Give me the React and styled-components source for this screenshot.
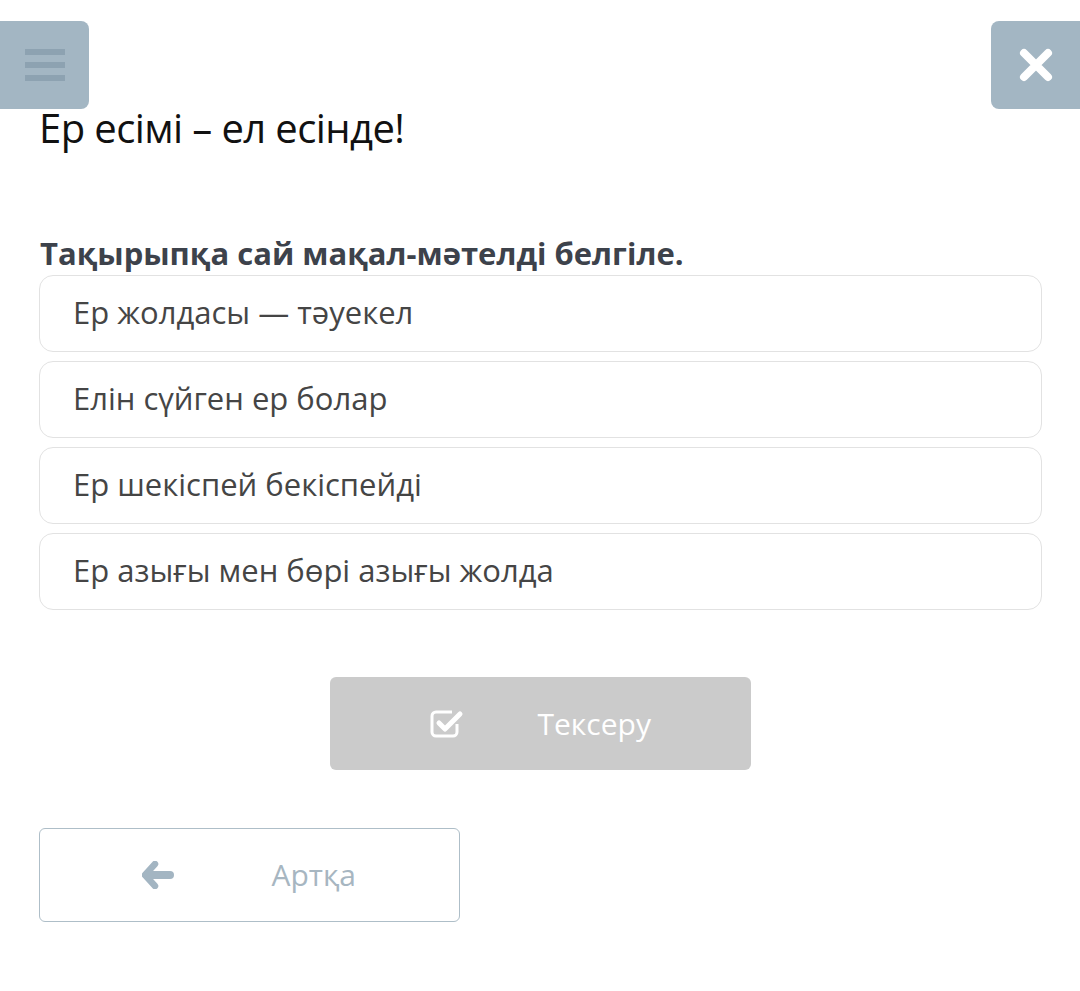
import React from 'react'
import styled, { createGlobalStyle } from 'styled-components'

const Global = createGlobalStyle`
    html, body {
        margin: 0;
        padding: 0;
        background: #FFFFFF;
        font-family: "Open Sans", "Noto Sans", sans-serif;
    }
`
const Page = styled.div`
    width: 1080px;
    min-height: 991px;
    padding-top: 21px;
    box-sizing: border-box;
`
const TopBar = styled.div`
    display: flex;
    justify-content: space-between;
    height: 88px;
`
const CornerButton = styled.button`
    width: 89px;
    height: 88px;
    border: 0;
    padding: 0;
    background-color: #A3B6C3;
    border-radius: ${p => p.side === 'left' ? '0 8px 8px 0' : '8px 0 0 8px'};
    display: flex;
    align-items: center;
    justify-content: center;
`
const Content = styled.div`
    padding: 0 38px 0 39px;
`
const Title = styled.h1`
    margin: -6px 0 0 0;
    font: normal 40px/50px "Open Sans", sans-serif;
    letter-spacing: -0.6px;
    color: #111111;
`
const Question = styled.h2`
    margin: 80px 0 0 1px;
    font: bold 31px/40px "Open Sans", sans-serif;
    color: #3D424B;
`
const Options = styled.div`
    display: flex;
    flex-direction: column;
    gap: 9px;
    margin-top: 2px;
`
const Option = styled.div`
    height: 75px;
    box-sizing: content-box;
    border: 1px solid #E2E2E2;
    border-radius: 14px;
    display: flex;
    align-items: center;
    padding: 0 0 0 33px;
    font: normal 31px/40px "Open Sans", sans-serif;
    color: #454545;
    & > span {
        margin-top: -3px;
    }
`
const CheckRow = styled.div`
    display: flex;
    justify-content: center;
    margin-top: 67px;
`
const ActionButton = styled.button`
    width: 421px;
    height: ${p => p.outline ? 94 : 93}px;
    box-sizing: border-box;
    border-radius: 6px;
    border: ${p => p.outline ? '1px solid #AEBEC8' : '0'};
    background-color: ${p => p.outline ? '#FFFFFF' : '#CBCBCB'};
    color: ${p => p.outline ? '#A7B6C1' : '#FFFFFF'};
    display: grid;
    grid-template-columns: 1fr 1fr;
    align-items: center;
    font: normal 30px/40px "Open Sans", sans-serif;
    padding: 0;
`
const IconCell = styled.span`
    display: flex;
    justify-content: flex-end;
    padding-right: ${p => p.pr}px;
`
const Label = styled.span`
    text-align: left;
    margin-left: ${p => p.pl}px;
`
const BackRow = styled.div`
    margin-top: 58px;
`

const MenuIcon = () => (
    <svg width="40" height="32" viewBox="0 0 40 32">
        <rect x="0" y="0" width="40" height="6" fill="#8DA2B1" />
        <rect x="0" y="13" width="40" height="6" fill="#8DA2B1" />
        <rect x="0" y="26" width="40" height="6" fill="#8DA2B1" />
    </svg>
)

const CloseIcon = () => (
    <svg width="34" height="34" viewBox="0 0 34 34">
        <path d="M5 5 L29 29 M29 5 L5 29" stroke="#FFFFFF" strokeWidth="8" strokeLinecap="round" />
    </svg>
)

const CheckIcon = () => (
    <svg width="34" height="28" viewBox="0 0 34 28">
        <path d="M27 14 V22 a4 4 0 0 1 -4 4 H6 a4 4 0 0 1 -4 -4 V6 a4 4 0 0 1 4 -4 H22" fill="none" stroke="#FFFFFF" strokeWidth="3" />
        <path d="M9 13 L15 19 L30 4" fill="none" stroke="#FFFFFF" strokeWidth="5" strokeLinecap="round" strokeLinejoin="round" />
    </svg>
)

const ArrowIcon = () => (
    <svg width="32" height="28" viewBox="0 0 32 28">
        <path d="M13 3 L3 14 L13 25" fill="none" stroke="#A3B5C2" strokeWidth="6.5" strokeLinecap="round" strokeLinejoin="round" />
        <path d="M5 14 H28" stroke="#A3B5C2" strokeWidth="8" strokeLinecap="round" />
    </svg>
)

const options = [
    'Ер жолдасы — тәуекел',
    'Елін сүйген ер болар',
    'Ер шекіспей бекіспейді',
    'Ер азығы мен бөрі азығы жолда',
]

const App = () => {
    return (
        <Page>
            <Global />
            <TopBar>
                <CornerButton side="left"><MenuIcon /></CornerButton>
                <CornerButton side="right"><CloseIcon /></CornerButton>
            </TopBar>
            <Content>
                <Title>Ер есімі – ел есінде!</Title>
                <Question>Тақырыпқа сай мақал-мәтелді белгіле.</Question>
                <Options>
                    {options.map(text => <Option key={text}><span>{text}</span></Option>)}
                </Options>
                <CheckRow>
                    <ActionButton>
                        <IconCell pr={77}><CheckIcon /></IconCell>
                        <Label pl={-3}>Тексеру</Label>
                    </ActionButton>
                </CheckRow>
                <BackRow>
                    <ActionButton outline>
                        <IconCell pr={76}><ArrowIcon /></IconCell>
                        <Label pl={22}>Артқа</Label>
                    </ActionButton>
                </BackRow>
            </Content>
        </Page>
    )
}

export default App
